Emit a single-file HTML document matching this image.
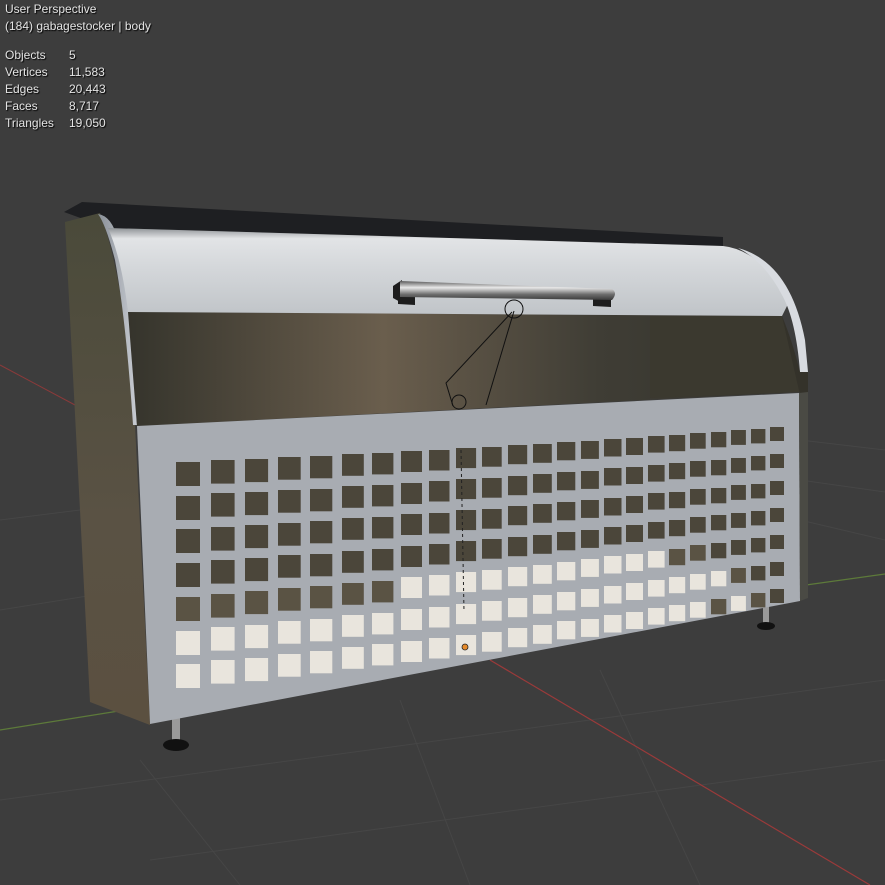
<!DOCTYPE html>
<html><head><meta charset="utf-8"><style>
html,body{margin:0;padding:0;background:#3d3d3d;width:885px;height:885px;overflow:hidden}
svg{position:absolute;left:0;top:0}
.t{position:absolute;left:5px;color:#e4e4e4;font:12px "Liberation Sans",sans-serif;text-shadow:1px 1px 1px #000;white-space:nowrap}
.n{position:absolute;left:64px}
.d{fill:#4b463a}.m{fill:#5a5344}.l{fill:#e9e5dd}
</style></head><body>
<svg width="885" height="885" viewBox="0 0 885 885">
<defs>
<linearGradient id="lid" x1="0" y1="0" x2="0" y2="1">
<stop offset="0" stop-color="#8e9296"/><stop offset="0.12" stop-color="#e2e4e6"/><stop offset="0.45" stop-color="#d4d7da"/><stop offset="1" stop-color="#c0c4c8"/></linearGradient>
<linearGradient id="inner" x1="0" y1="0" x2="1" y2="0">
<stop offset="0" stop-color="#35342c"/><stop offset="0.38" stop-color="#6a5e4d"/><stop offset="0.7" stop-color="#3f3d35"/><stop offset="1" stop-color="#34332c"/></linearGradient>
<linearGradient id="side" x1="0" y1="0" x2="0" y2="1">
<stop offset="0" stop-color="#4a4a3a"/><stop offset="0.6" stop-color="#5a5244"/><stop offset="1" stop-color="#5b5040"/></linearGradient>
<linearGradient id="edge" x1="0" y1="0" x2="1" y2="0">
<stop offset="0" stop-color="#8a9098"/><stop offset="1" stop-color="#c8ccd2"/></linearGradient>
<linearGradient id="bar" x1="0" y1="0" x2="0" y2="1">
<stop offset="0" stop-color="#5a5a5a"/><stop offset="0.35" stop-color="#e8e8e8"/><stop offset="0.7" stop-color="#6e6e6e"/><stop offset="1" stop-color="#3a3a3a"/></linearGradient>
</defs>
<g stroke="#464646" stroke-width="1">
<line x1="0" y1="520" x2="120" y2="505"/><line x1="0" y1="610" x2="125" y2="590"/>
<line x1="800" y1="440" x2="885" y2="450"/><line x1="800" y1="480" x2="885" y2="492"/><line x1="800" y1="520" x2="885" y2="540"/>
<line x1="0" y1="800" x2="885" y2="680"/><line x1="150" y1="860" x2="885" y2="760"/>
<line x1="240" y1="885" x2="140" y2="760"/><line x1="470" y1="885" x2="400" y2="700"/><line x1="700" y1="885" x2="600" y2="670"/>
</g>
<line x1="0" y1="365" x2="75" y2="405" stroke="#8a3a3a" stroke-width="1"/>
<line x1="490" y1="660" x2="870" y2="885" stroke="#9a3a3a" stroke-width="1.2"/>
<line x1="0" y1="730" x2="125" y2="710" stroke="#5d7a3a" stroke-width="1.2"/>
<line x1="806" y1="585" x2="885" y2="574" stroke="#5d7a3a" stroke-width="1.2"/>
<rect x="172" y="715" width="8" height="30" fill="#9a9a9a"/>
<ellipse cx="176" cy="745" rx="13" ry="6" fill="#111"/>
<rect x="763" y="605" width="6" height="20" fill="#9a9a9a"/>
<ellipse cx="766" cy="626" rx="9" ry="4" fill="#111"/>
<polygon points="64,212 82,202 723,237 723,246 108,228" fill="#1e1f22"/>
<path d="M65,222 L100,213 Q125,280 135,425 L150,725 L90,702 Z" fill="url(#side)"/>
<path d="M98,214 Q112,216 118,240 Q130,300 137,425 L133,425 Q126,320 115,260 Q106,225 98,214 Z" fill="url(#edge)"/>
<polygon points="128,312 782,316 800,392 137,426" fill="url(#inner)"/>
<polygon points="650,316 782,316 800,392 650,398" fill="#3b392f"/>
<path d="M108,228 L723,246 Q760,250 790,300 L782,316 L128,312 Q122,260 108,228 Z" fill="url(#lid)"/>
<path d="M738,248 Q790,262 805,340 L808,372 L800,372 Q796,320 782,295 Q765,262 738,248 Z" fill="#d8dbe0"/>
<path d="M782,316 Q792,340 800,372 L808,372 L808,395 L800,395 Z" fill="#34322a"/>
<polygon points="393,286 402,280 402,303 393,298" fill="#1d1d1d"/>
<polygon points="398,294 415,294 415,305 398,304" fill="#1d1d1d"/>
<polygon points="593,296 611,297 611,307 593,306" fill="#1d1d1d"/>
<path d="M400,281 L612,289 Q618,293 612,300 L400,297 Z" fill="url(#bar)"/>
<g fill="none" stroke="#111" stroke-width="1">
<circle cx="514" cy="309" r="9"/><circle cx="459" cy="402" r="7"/>
<polyline points="512,312 446,383 453,406"/><line x1="514" y1="311" x2="486" y2="405"/>
</g>
<polygon points="137,426 799,393 800,601 150,724" fill="#a8acb2"/>
<polygon points="799,393 808,392 808,598 800,601" fill="#4a4a44"/>
<g transform="translate(176,462)"><rect y="0" width="24" height="24" class="d"/><rect y="34" width="24" height="24" class="d"/><rect y="67" width="24" height="24" class="d"/><rect y="101" width="24" height="24" class="d"/><rect y="135" width="24" height="24" class="m"/><rect y="169" width="24" height="24" class="l"/><rect y="202" width="24" height="24" class="l"/></g>
<g transform="translate(211,460)"><rect y="0" width="23.6" height="23.6" class="d"/><rect y="33" width="23.6" height="23.6" class="d"/><rect y="67" width="23.6" height="23.6" class="d"/><rect y="100" width="23.6" height="23.6" class="d"/><rect y="134" width="23.6" height="23.6" class="m"/><rect y="167" width="23.6" height="23.6" class="l"/><rect y="200" width="23.6" height="23.6" class="l"/></g>
<g transform="translate(245,459)"><rect y="0" width="23.1" height="23.1" class="d"/><rect y="33" width="23.1" height="23.1" class="d"/><rect y="66" width="23.1" height="23.1" class="d"/><rect y="99" width="23.1" height="23.1" class="d"/><rect y="132" width="23.1" height="23.1" class="m"/><rect y="166" width="23.1" height="23.1" class="l"/><rect y="199" width="23.1" height="23.1" class="l"/></g>
<g transform="translate(278,457)"><rect y="0" width="22.7" height="22.7" class="d"/><rect y="33" width="22.7" height="22.7" class="d"/><rect y="66" width="22.7" height="22.7" class="d"/><rect y="98" width="22.7" height="22.7" class="d"/><rect y="131" width="22.7" height="22.7" class="m"/><rect y="164" width="22.7" height="22.7" class="l"/><rect y="197" width="22.7" height="22.7" class="l"/></g>
<g transform="translate(310,456)"><rect y="0" width="22.3" height="22.3" class="d"/><rect y="33" width="22.3" height="22.3" class="d"/><rect y="65" width="22.3" height="22.3" class="d"/><rect y="98" width="22.3" height="22.3" class="d"/><rect y="130" width="22.3" height="22.3" class="m"/><rect y="163" width="22.3" height="22.3" class="l"/><rect y="195" width="22.3" height="22.3" class="l"/></g>
<g transform="translate(342,454)"><rect y="0" width="21.8" height="21.8" class="d"/><rect y="32" width="21.8" height="21.8" class="d"/><rect y="64" width="21.8" height="21.8" class="d"/><rect y="97" width="21.8" height="21.8" class="d"/><rect y="129" width="21.8" height="21.8" class="m"/><rect y="161" width="21.8" height="21.8" class="l"/><rect y="193" width="21.8" height="21.8" class="l"/></g>
<g transform="translate(372,453)"><rect y="0" width="21.4" height="21.4" class="d"/><rect y="32" width="21.4" height="21.4" class="d"/><rect y="64" width="21.4" height="21.4" class="d"/><rect y="96" width="21.4" height="21.4" class="d"/><rect y="128" width="21.4" height="21.4" class="m"/><rect y="160" width="21.4" height="21.4" class="l"/><rect y="191" width="21.4" height="21.4" class="l"/></g>
<g transform="translate(401,451)"><rect y="0" width="21" height="21" class="d"/><rect y="32" width="21" height="21" class="d"/><rect y="63" width="21" height="21" class="d"/><rect y="95" width="21" height="21" class="d"/><rect y="126" width="21" height="21" class="l"/><rect y="158" width="21" height="21" class="l"/><rect y="190" width="21" height="21" class="l"/></g>
<g transform="translate(429,450)"><rect y="0" width="20.5" height="20.5" class="d"/><rect y="31" width="20.5" height="20.5" class="d"/><rect y="63" width="20.5" height="20.5" class="d"/><rect y="94" width="20.5" height="20.5" class="d"/><rect y="125" width="20.5" height="20.5" class="l"/><rect y="157" width="20.5" height="20.5" class="l"/><rect y="188" width="20.5" height="20.5" class="l"/></g>
<g transform="translate(456,448)"><rect y="0" width="20.1" height="20.1" class="d"/><rect y="31" width="20.1" height="20.1" class="d"/><rect y="62" width="20.1" height="20.1" class="d"/><rect y="93" width="20.1" height="20.1" class="d"/><rect y="124" width="20.1" height="20.1" class="l"/><rect y="156" width="20.1" height="20.1" class="l"/><rect y="187" width="20.1" height="20.1" class="l"/></g>
<g transform="translate(482,447)"><rect y="0" width="19.7" height="19.7" class="d"/><rect y="31" width="19.7" height="19.7" class="d"/><rect y="62" width="19.7" height="19.7" class="d"/><rect y="92" width="19.7" height="19.7" class="d"/><rect y="123" width="19.7" height="19.7" class="l"/><rect y="154" width="19.7" height="19.7" class="l"/><rect y="185" width="19.7" height="19.7" class="l"/></g>
<g transform="translate(508,445)"><rect y="0" width="19.2" height="19.2" class="d"/><rect y="31" width="19.2" height="19.2" class="d"/><rect y="61" width="19.2" height="19.2" class="d"/><rect y="92" width="19.2" height="19.2" class="d"/><rect y="122" width="19.2" height="19.2" class="l"/><rect y="153" width="19.2" height="19.2" class="l"/><rect y="183" width="19.2" height="19.2" class="l"/></g>
<g transform="translate(533,444)"><rect y="0" width="18.8" height="18.8" class="d"/><rect y="30" width="18.8" height="18.8" class="d"/><rect y="60" width="18.8" height="18.8" class="d"/><rect y="91" width="18.8" height="18.8" class="d"/><rect y="121" width="18.8" height="18.8" class="l"/><rect y="151" width="18.8" height="18.8" class="l"/><rect y="181" width="18.8" height="18.8" class="l"/></g>
<g transform="translate(557,442)"><rect y="0" width="18.3" height="18.3" class="d"/><rect y="30" width="18.3" height="18.3" class="d"/><rect y="60" width="18.3" height="18.3" class="d"/><rect y="90" width="18.3" height="18.3" class="d"/><rect y="120" width="18.3" height="18.3" class="l"/><rect y="150" width="18.3" height="18.3" class="l"/><rect y="179" width="18.3" height="18.3" class="l"/></g>
<g transform="translate(581,441)"><rect y="0" width="17.9" height="17.9" class="d"/><rect y="30" width="17.9" height="17.9" class="d"/><rect y="59" width="17.9" height="17.9" class="d"/><rect y="89" width="17.9" height="17.9" class="d"/><rect y="118" width="17.9" height="17.9" class="l"/><rect y="148" width="17.9" height="17.9" class="l"/><rect y="178" width="17.9" height="17.9" class="l"/></g>
<g transform="translate(604,439)"><rect y="0" width="17.5" height="17.5" class="d"/><rect y="29" width="17.5" height="17.5" class="d"/><rect y="59" width="17.5" height="17.5" class="d"/><rect y="88" width="17.5" height="17.5" class="d"/><rect y="117" width="17.5" height="17.5" class="l"/><rect y="147" width="17.5" height="17.5" class="l"/><rect y="176" width="17.5" height="17.5" class="l"/></g>
<g transform="translate(626,438)"><rect y="0" width="17" height="17" class="d"/><rect y="29" width="17" height="17" class="d"/><rect y="58" width="17" height="17" class="d"/><rect y="87" width="17" height="17" class="d"/><rect y="116" width="17" height="17" class="l"/><rect y="145" width="17" height="17" class="l"/><rect y="174" width="17" height="17" class="l"/></g>
<g transform="translate(648,436)"><rect y="0" width="16.6" height="16.6" class="d"/><rect y="29" width="16.6" height="16.6" class="d"/><rect y="57" width="16.6" height="16.6" class="d"/><rect y="86" width="16.6" height="16.6" class="d"/><rect y="115" width="16.6" height="16.6" class="l"/><rect y="144" width="16.6" height="16.6" class="l"/><rect y="172" width="16.6" height="16.6" class="l"/></g>
<g transform="translate(669,435)"><rect y="0" width="16.2" height="16.2" class="d"/><rect y="28" width="16.2" height="16.2" class="d"/><rect y="57" width="16.2" height="16.2" class="d"/><rect y="85" width="16.2" height="16.2" class="d"/><rect y="114" width="16.2" height="16.2" class="m"/><rect y="142" width="16.2" height="16.2" class="l"/><rect y="170" width="16.2" height="16.2" class="l"/></g>
<g transform="translate(690,433)"><rect y="0" width="15.7" height="15.7" class="d"/><rect y="28" width="15.7" height="15.7" class="d"/><rect y="56" width="15.7" height="15.7" class="d"/><rect y="84" width="15.7" height="15.7" class="d"/><rect y="112" width="15.7" height="15.7" class="m"/><rect y="141" width="15.7" height="15.7" class="l"/><rect y="169" width="15.7" height="15.7" class="l"/></g>
<g transform="translate(711,432)"><rect y="0" width="15.3" height="15.3" class="d"/><rect y="28" width="15.3" height="15.3" class="d"/><rect y="56" width="15.3" height="15.3" class="d"/><rect y="83" width="15.3" height="15.3" class="d"/><rect y="111" width="15.3" height="15.3" class="d"/><rect y="139" width="15.3" height="15.3" class="l"/><rect y="167" width="15.3" height="15.3" class="m"/></g>
<g transform="translate(731,430)"><rect y="0" width="14.9" height="14.9" class="d"/><rect y="28" width="14.9" height="14.9" class="d"/><rect y="55" width="14.9" height="14.9" class="d"/><rect y="83" width="14.9" height="14.9" class="d"/><rect y="110" width="14.9" height="14.9" class="d"/><rect y="138" width="14.9" height="14.9" class="m"/><rect y="166" width="14.9" height="14.9" class="l"/></g>
<g transform="translate(751,429)"><rect y="0" width="14.4" height="14.4" class="d"/><rect y="27" width="14.4" height="14.4" class="d"/><rect y="55" width="14.4" height="14.4" class="d"/><rect y="82" width="14.4" height="14.4" class="d"/><rect y="109" width="14.4" height="14.4" class="d"/><rect y="137" width="14.4" height="14.4" class="d"/><rect y="164" width="14.4" height="14.4" class="m"/></g>
<g transform="translate(770,427)"><rect y="0" width="14" height="14" class="d"/><rect y="27" width="14" height="14" class="d"/><rect y="54" width="14" height="14" class="d"/><rect y="81" width="14" height="14" class="d"/><rect y="108" width="14" height="14" class="d"/><rect y="135" width="14" height="14" class="d"/><rect y="162" width="14" height="14" class="d"/></g>
<line x1="461" y1="450" x2="464" y2="612" stroke="#222" stroke-width="1" stroke-dasharray="3,3"/>
<circle cx="465" cy="647" r="3" fill="#e58a2a" stroke="#222" stroke-width="0.8"/>
</svg>
<div class="t" style="top:2px">User Perspective</div>
<div class="t" style="top:19px">(184) gabagestocker | body</div>
<div class="t" style="top:48px">Objects<span class="n">5</span></div>
<div class="t" style="top:65px">Vertices<span class="n">11,583</span></div>
<div class="t" style="top:82px">Edges<span class="n">20,443</span></div>
<div class="t" style="top:99px">Faces<span class="n">8,717</span></div>
<div class="t" style="top:116px">Triangles<span class="n">19,050</span></div>
</body></html>
